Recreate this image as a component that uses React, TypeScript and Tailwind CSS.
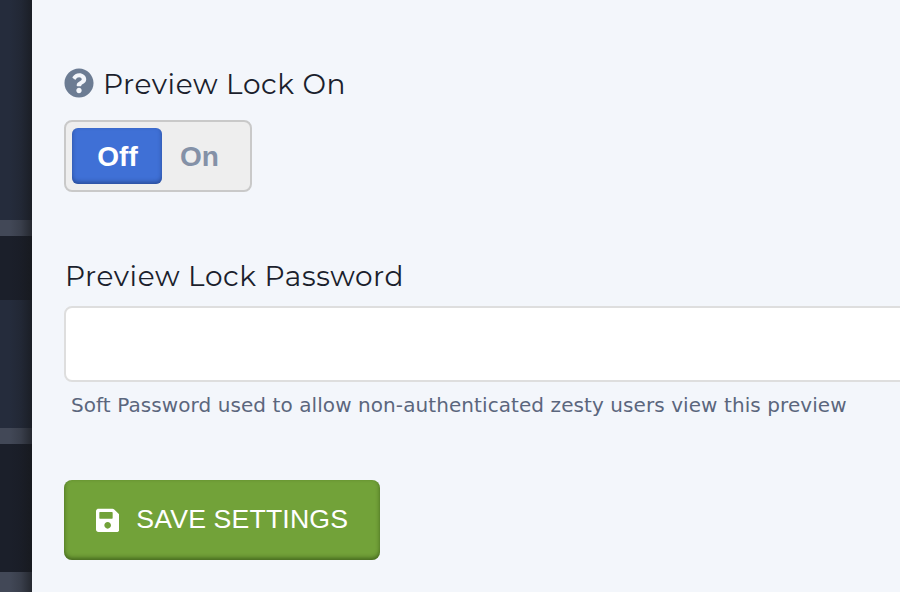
import React from "react";
import { FaQuestionCircle, FaSave } from "react-icons/fa";

function Rail() {
  return (
    <aside className="relative flex h-full w-8 shrink-0 flex-col bg-[#252c3c]">
      <div className="h-[220px]" />
      <div className="h-4 bg-[#424857]" />
      <div className="h-16 bg-[#1b1f2a]" />
      <div className="h-32" />
      <div className="h-4 bg-[#424857]" />
      <div className="h-32 bg-[#1b1f2a]" />
      <div className="h-5 bg-[#424857]" />
      <div className="absolute inset-0 bg-linear-to-r from-[#15171a]/0 from-30% via-[#15171a]/20 via-65% to-[#15171a]/65" />
    </aside>
  );
}

const heading =
  "whitespace-nowrap font-['Montserrat','Inter',sans-serif] text-[28px] leading-8 font-normal tracking-[0.6px] text-[#1b1f2d]";

export default function App() {
  return (
    <div className="flex h-[592px] w-[900px] overflow-hidden bg-[#f3f6fb]">
      <Rail />
      <main className="flex min-w-0 flex-1 flex-col items-start pl-8">
        <div className="mt-[68px] flex h-8 items-center">
          <FaQuestionCircle className="mb-0.5 size-[30px] shrink-0 text-[#6c7c93]" />
          <span className={`${heading} ml-[9px]`}>Preview Lock On</span>
        </div>
        <div className="mt-5 flex h-[72px] w-[188px] rounded-lg border-2 border-[#c9c9c9] bg-[#eeeeee] p-1.5 font-['Liberation_Sans',Arial,sans-serif] text-[28px] leading-[57px] font-bold">
          <button className="h-14 w-[90px] rounded-md bg-[#3f70d6] pl-px text-center text-white shadow-[inset_0_-2px_4px_rgba(20,40,90,0.5)]">
            Off
          </button>
          <button className="ml-[18px] h-14 text-[#8491a7]">On</button>
        </div>
        <label className={`${heading} mt-[68px] ml-px`}>
          Preview Lock Password
        </label>
        <input
          type="text"
          className="mt-[14px] h-[76px] w-[900px] rounded-lg border-2 border-[#dedede] bg-white outline-none"
        />
        <p className="mt-[9px] ml-[7px] font-['DejaVu_Sans',Verdana,sans-serif] text-[20px] leading-7 tracking-[0.08px] whitespace-nowrap text-[#5b667d]">
          Soft Password used to allow non-authenticated zesty users view this preview
        </p>
        <button className="mt-[61px] flex h-20 w-[316px] items-center rounded-lg bg-[#72a239] pl-8 font-['Liberation_Sans',Arial,sans-serif] text-[26.67px] text-white shadow-[inset_0_-2px_4px_rgba(35,60,10,0.6)]">
          <FaSave className="h-[26.67px] w-[23.34px] shrink-0" />
          <span className="mb-[3px] ml-[17px] tracking-[0.15px] whitespace-nowrap">SAVE SETTINGS</span>
        </button>
      </main>
    </div>
  );
}
